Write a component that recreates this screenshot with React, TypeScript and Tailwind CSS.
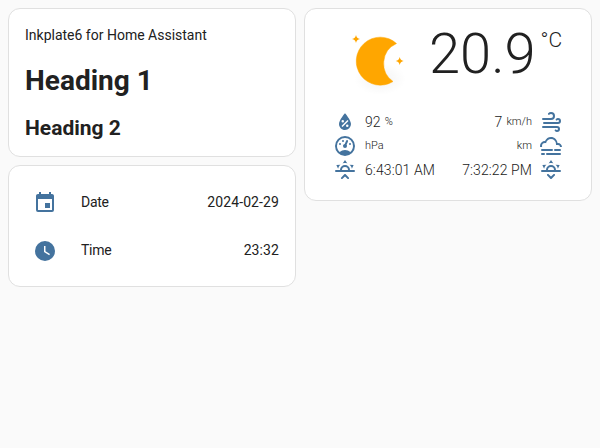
const mdi = {
    calendar: 'M19,19H5V8H19M16,1V3H8V1H6V3H5C3.89,3 3,3.89 3,5V19A2,2 0 0,0 5,21H19A2,2 0 0,0 21,19V5C21,3.89 20.1,3 19,3H18V1M17,12H12V17H17V12Z',
    clock: 'M12,2A10,10 0 0,1 22,12A10,10 0 0,1 12,22A10,10 0 0,1 2,12A10,10 0 0,1 12,2M12.5,7H11V13L16.2,16.2L17,14.9L12.5,12.2V7Z',
    water: 'M12,3.25C12,3.25 6,10 6,14C6,17.32 8.69,20 12,20A6,6 0 0,0 18,14C18,10 12,3.25 12,3.25M14.47,9.97L15.53,11.03L9.53,17.03L8.47,15.97M9.75,10A1.25,1.25 0 0,1 11,11.25A1.25,1.25 0 0,1 9.75,12.5A1.25,1.25 0 0,1 8.5,11.25A1.25,1.25 0 0,1 9.75,10M14.25,14.5A1.25,1.25 0 0,1 15.5,15.75A1.25,1.25 0 0,1 14.25,17A1.25,1.25 0 0,1 13,15.75A1.25,1.25 0 0,1 14.25,14.5Z',
    gauge: 'M17.3,18C19,16.5 20,14.4 20,12A8,8 0 0,0 12,4A8,8 0 0,0 4,12C4,14.4 5,16.5 6.7,18C8.2,16.7 10,16 12,16C14,16 15.9,16.7 17.3,18M12,2A10,10 0 0,1 22,12A10,10 0 0,1 12,22A10,10 0 0,1 2,12A10,10 0 0,1 12,2M7,9A1,1 0 0,1 8,10A1,1 0 0,1 7,11A1,1 0 0,1 6,10A1,1 0 0,1 7,9M10,6A1,1 0 0,1 11,7A1,1 0 0,1 10,8A1,1 0 0,1 9,7A1,1 0 0,1 10,6M17,9A1,1 0 0,1 18,10A1,1 0 0,1 17,11A1,1 0 0,1 16,10A1,1 0 0,1 17,9M14.4,6.1C14.9,6.3 15.1,6.9 15,7.4L13.6,10.8C13.8,11.1 14,11.5 14,12A2,2 0 0,1 12,14A2,2 0 0,1 10,12C10,11 10.7,10.1 11.7,10L13.1,6.7C13.3,6.1 13.9,5.9 14.4,6.1Z',
    windy: 'M4,10A1,1 0 0,1 3,9A1,1 0 0,1 4,8H12A2,2 0 0,0 14,6A2,2 0 0,0 12,4C11.45,4 10.95,4.22 10.59,4.59C10.2,5 9.56,5 9.17,4.59C8.78,4.2 8.78,3.56 9.17,3.17C9.9,2.45 10.9,2 12,2A4,4 0 0,1 16,6A4,4 0 0,1 12,10H4M19,12A1,1 0 0,0 20,11A1,1 0 0,0 19,10C18.72,10 18.47,10.11 18.29,10.29C17.9,10.68 17.27,10.68 16.88,10.29C16.5,9.9 16.5,9.27 16.88,8.88C17.42,8.34 18.17,8 19,8A3,3 0 0,1 22,11A3,3 0 0,1 19,14H5A1,1 0 0,1 4,13A1,1 0 0,1 5,12H19M18,18H4A1,1 0 0,1 3,17A1,1 0 0,1 4,16H18A3,3 0 0,1 21,19A3,3 0 0,1 18,22C17.17,22 16.42,21.66 15.88,21.12C15.5,20.73 15.5,20.1 15.88,19.71C16.27,19.32 16.9,19.32 17.29,19.71C17.47,19.89 17.72,20 18,20A1,1 0 0,0 19,19A1,1 0 0,0 18,18Z',
    fog: 'M3,15H13A1,1 0 0,1 14,16A1,1 0 0,1 13,17H3A1,1 0 0,1 2,16A1,1 0 0,1 3,15M16,15H21A1,1 0 0,1 22,16A1,1 0 0,1 21,17H16A1,1 0 0,1 15,16A1,1 0 0,1 16,15M1,12A5,5 0 0,1 6,7C7,4.65 9.3,3 12,3C15.43,3 18.24,5.66 18.5,9.03L19,9C21.19,9 22.97,10.76 23,13H21A2,2 0 0,0 19,11H17V10A5,5 0 0,0 12,5C9.5,5 7.45,6.82 7.06,9.19C6.73,9.07 6.37,9 6,9A3,3 0 0,0 3,12C3,12.35 3.06,12.69 3.17,13H1.1L1,12M3,19H5A1,1 0 0,1 6,20A1,1 0 0,1 5,21H3A1,1 0 0,1 2,20A1,1 0 0,1 3,19M8,19H21A1,1 0 0,1 22,20A1,1 0 0,1 21,21H8A1,1 0 0,1 7,20A1,1 0 0,1 8,19Z',
    sunrise: 'M3,12H7A5,5 0 0,1 12,7A5,5 0 0,1 17,12H21A1,1 0 0,1 22,13A1,1 0 0,1 21,14H3A1,1 0 0,1 2,13A1,1 0 0,1 3,12M15,12A3,3 0 0,0 12,9A3,3 0 0,0 9,12H15M12,2L14.39,5.42C13.65,5.15 12.84,5 12,5C11.16,5 10.35,5.15 9.61,5.42L12,2M3.34,7L7.5,6.65C6.9,7.16 6.36,7.78 5.94,8.5C5.5,9.24 5.25,10 5.11,10.79L3.34,7M20.65,7L18.88,10.79C18.74,10 18.47,9.23 18.05,8.5C17.63,7.78 17.1,7.15 16.5,6.64L20.65,7M12.71,16.3L15.82,19.41C16.21,19.8 16.21,20.43 15.82,20.82C15.43,21.21 14.8,21.21 14.41,20.82L12,18.41L9.59,20.82C9.2,21.21 8.57,21.21 8.18,20.82C7.79,20.43 7.79,19.8 8.18,19.41L11.29,16.3C11.5,16.1 11.74,16 12,16C12.26,16 12.5,16.1 12.71,16.3Z',
    sunset: 'M3,12H7A5,5 0 0,1 12,7A5,5 0 0,1 17,12H21A1,1 0 0,1 22,13A1,1 0 0,1 21,14H3A1,1 0 0,1 2,13A1,1 0 0,1 3,12M15,12A3,3 0 0,0 12,9A3,3 0 0,0 9,12H15M12,2L14.39,5.42C13.65,5.15 12.84,5 12,5C11.16,5 10.35,5.15 9.61,5.42L12,2M3.34,7L7.5,6.65C6.9,7.16 6.36,7.78 5.94,8.5C5.5,9.24 5.25,10 5.11,10.79L3.34,7M20.65,7L18.88,10.79C18.74,10 18.47,9.23 18.05,8.5C17.63,7.78 17.1,7.15 16.5,6.64L20.65,7M12.71,20.71L15.82,17.6C16.21,17.21 16.21,16.57 15.82,16.18C15.43,15.79 14.8,15.79 14.41,16.18L12,18.59L9.59,16.18C9.2,15.79 8.57,15.79 8.18,16.18C7.79,16.57 7.79,17.21 8.18,17.6L11.29,20.71C11.5,20.9 11.74,21 12,21C12.26,21 12.5,20.9 12.71,20.71Z',
};

function Icon({ path }: { path: string }) {
    return (
        <svg viewBox="0 0 24 24" className="h-6 w-6 shrink-0 fill-[#44739e]">
            <path d={path} />
        </svg>
    );
}

function MoonIcon() {
    return (
        <svg viewBox="0 0 70 64" className="h-16 w-[70px] shrink-0">
            <defs>
                <radialGradient id="shade">
                    <stop offset="0%" stopColor="#000" stopOpacity="0.05" />
                    <stop offset="100%" stopColor="#000" stopOpacity="0" />
                </radialGradient>
            </defs>
            <ellipse cx="32" cy="48" rx="26" ry="16" fill="url(#shade)" />
            <path d="M48.5 12.5A24 24 0 1 0 45 50.5A22 22 0 0 1 48.5 12.5Z" fill="#ffa600" stroke="#ffa600" strokeWidth="0.5" strokeLinejoin="round" />
            <path d="M8 4Q8.6 7.4 12 8Q8.6 8.6 8 12Q7.4 8.6 4 8Q7.4 7.4 8 4Z" fill="#ffa600" />
            <path d="M51.7 26Q52.3 29.4 55.7 30Q52.3 30.6 51.7 34Q51.1 30.6 47.7 30Q51.1 29.4 51.7 26Z" fill="#ffa600" />
        </svg>
    );
}

function Row({ path, label, value }: { path: string; label: string; value: string }) {
    return (
        <div className="flex h-12 items-center">
            <div className="flex w-10 shrink-0 justify-center pt-0.5">
                <Icon path={path} />
            </div>
            <div className="ml-4 flex-1 text-sm tracking-[-0.3px]">{label}</div>
            <div className="text-sm tracking-[0.1px]">{value}</div>
        </div>
    );
}

function StatLeft({ path, value, unit }: { path: string; value?: string; unit?: string }) {
    return (
        <div className="flex h-6 items-center">
            <Icon path={path} />
            <span className="ml-2 text-sm font-light tracking-[0.1px]">{value}</span>
            {unit && <span className={value ? 'ml-1 text-[11px] font-light' : 'text-[11px] font-light'}>{unit}</span>}
        </div>
    );
}

function StatRight({ path, value, unit }: { path: string; value?: string; unit?: string }) {
    return (
        <div className="flex h-6 items-center justify-end">
            <span className="text-sm font-light tracking-[0.1px]">{value}</span>
            {unit && <span className={value ? 'ml-1 text-[11px] font-light' : 'text-[11px] font-light'}>{unit}</span>}
            <span className="ml-[7px] flex">
                <Icon path={path} />
            </span>
        </div>
    );
}

export default function App() {
    return (
        <div className="min-h-[448px] bg-[#fafafa] p-2 font-['Roboto',sans-serif] text-[#212121]">
            <div className="grid grid-cols-2 items-start gap-2">
                <div className="flex flex-col gap-2">
                    <div className="h-[149px] rounded-xl border border-[#e0e0e0] bg-white px-4 pt-4">
                        <div className="text-sm leading-5">Inkplate6 for Home Assistant</div>
                        <div className="mt-[19px] text-[28px] leading-[34px] font-bold">Heading 1</div>
                        <div className="mt-[18px] text-[21px] leading-6 font-bold">Heading 2</div>
                    </div>
                    <div className="rounded-xl border border-[#e0e0e0] bg-white px-4 pt-3 pb-3">
                        <Row path={mdi.calendar} label="Date" value="2024-02-29" />
                        <Row path={mdi.clock} label="Time" value="23:32" />
                    </div>
                </div>
                <div className="h-[193px] rounded-xl border border-[#e0e0e0] bg-white px-7">
                    <div className="flex h-[101px] items-start pl-[15px]">
                        <div className="mt-[22px]">
                            <MoonIcon />
                        </div>
                        <div className="mt-[10px] ml-[11px] text-[56px] leading-[70px] font-light">20.9</div>
                        <div className="mt-[19px] ml-[5px] text-[21px] leading-6 font-light">°C</div>
                    </div>
                    <div className="grid grid-cols-2">
                        <div className="flex flex-col">
                            <StatLeft path={mdi.water} value="92" unit="%" />
                            <StatLeft path={mdi.gauge} unit="hPa" />
                            <StatLeft path={mdi.sunrise} value="6:43:01 AM" />
                        </div>
                        <div className="flex flex-col">
                            <StatRight path={mdi.windy} value="7" unit="km/h" />
                            <StatRight path={mdi.fog} unit="km" />
                            <StatRight path={mdi.sunset} value="7:32:22 PM" />
                        </div>
                    </div>
                </div>
            </div>
        </div>
    );
}
